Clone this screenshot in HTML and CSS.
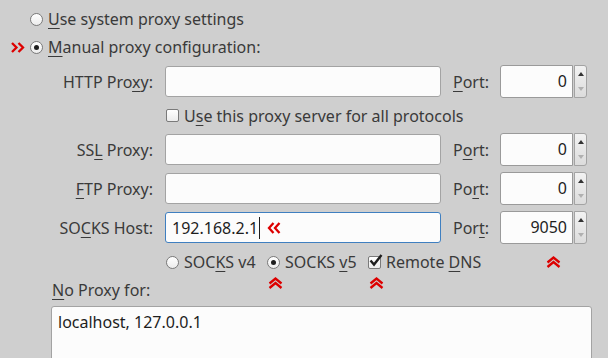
FILE: index.html
```html
<!DOCTYPE html>
<html lang="en">
<head>
    <meta charset="UTF-8">
    <title>Proxy settings</title>
    <link rel="stylesheet" href="styles.css">
</head>
<body>
    <div class="panel">
        <div class="choice">
            <span class="marker"></span>
            <span class="radio"></span>
            <span><u>U</u>se system proxy settings</span>
        </div>
        <div class="choice">
            <span class="marker">
                <svg width="14" height="11" viewBox="0 0 14 11"><polyline points="1,1 5.5,5.5 1,10" /><polyline points="7.5,1 12,5.5 7.5,10" /></svg>
            </span>
            <span class="radio on"></span>
            <span><u>M</u>anual proxy configuration:</span>
        </div>

        <div class="proxy-grid">
            <div class="label">HTTP Pro<u>x</u>y:</div>
            <div class="field"></div>
            <div class="port-label"><u>P</u>ort:</div>
            <div class="spin"><div class="spin-value">0</div><div class="spin-buttons"><span class="up"></span><span class="down"></span></div></div>

            <div class="check-row">
                <span class="check"></span>
                <span>U<u>s</u>e this proxy server for all protocols</span>
            </div>

            <div class="label">SS<u>L</u> Proxy:</div>
            <div class="field"></div>
            <div class="port-label">P<u>o</u>rt:</div>
            <div class="spin"><div class="spin-value">0</div><div class="spin-buttons"><span class="up"></span><span class="down"></span></div></div>

            <div class="label"><u>F</u>TP Proxy:</div>
            <div class="field"></div>
            <div class="port-label">Po<u>r</u>t:</div>
            <div class="spin"><div class="spin-value">0</div><div class="spin-buttons"><span class="up"></span><span class="down"></span></div></div>

            <div class="label">SO<u>C</u>KS Host:</div>
            <div class="field focus">
                <span>192.168.2.1</span><span class="caret"></span>
                <svg class="back-mark" width="14" height="12" viewBox="0 0 14 12"><polyline points="6.5,1 2,6 6.5,11" /><polyline points="12.5,1 8,6 12.5,11" /></svg>
            </div>
            <div class="port-label">Por<u>t</u>:</div>
            <div class="spin"><div class="spin-value">9050</div><div class="spin-buttons"><span class="up"></span><span class="down"></span></div></div>

            <div class="options">
                <div class="option">
                    <span class="radio"></span>
                    <span>SOC<u>K</u>S v4</span>
                </div>
                <div class="option">
                    <span class="radio on"></span>
                    <span>SOCKS <u>v</u>5</span>
                    <svg class="up-mark" width="15" height="12" viewBox="0 0 15 12"><polyline points="1.5,6.5 7.5,1.5 13.5,6.5" /><polyline points="1.5,11 7.5,6 13.5,11" /></svg>
                </div>
                <div class="option">
                    <span class="check">
                        <svg width="15" height="13" viewBox="0 0 15 13"><path class="tick" d="M2.5 6.5 L6 10.5 L13.5 1" /></svg>
                    </span>
                    <span>Remote <u>D</u>NS</span>
                    <svg class="up-mark" width="15" height="12" viewBox="0 0 15 12"><polyline points="1.5,6.5 7.5,1.5 13.5,6.5" /><polyline points="1.5,11 7.5,6 13.5,11" /></svg>
                </div>
            </div>
            <div class="port-mark">
                <svg width="15" height="12" viewBox="0 0 15 12"><polyline points="1.5,6.5 7.5,1.5 13.5,6.5" /><polyline points="1.5,11 7.5,6 13.5,11" /></svg>
            </div>
        </div>

        <div class="no-proxy-label"><u>N</u>o Proxy for:</div>
        <div class="no-proxy">localhost, 127.0.0.1</div>
    </div>
</body>
</html>
```

FILE: styles.css
```css
/* Page */
body {
    margin: 0;
    background: #cfcfcf;
    font-family: 'Noto Sans', sans-serif;
    font-size: 16px;
    color: #3a3a3a;
    overflow: hidden;
}

.panel {
    padding-top: 5px;
    height: 358px;
    box-sizing: border-box;
    overflow: hidden;
}

u {
    text-decoration-thickness: 1px;
    text-underline-offset: 3px;
}

svg polyline {
    fill: none;
    stroke: #dd0000;
    stroke-width: 2.3;
}

/* Radio choices */
.choice {
    display: flex;
    align-items: center;
    height: 28px;
}

.marker {
    width: 30px;
    display: flex;
    align-items: center;
    padding-left: 11px;
    box-sizing: border-box;
}

.radio {
    width: 13px;
    height: 13px;
    box-sizing: border-box;
    border: 1px solid #7a7a7a;
    border-radius: 50%;
    background: linear-gradient(#ffffff, #ececec);
    margin-right: 5px;
    flex: none;
    position: relative;
}

.radio.on::after {
    content: '';
    position: absolute;
    width: 5px;
    height: 5px;
    border-radius: 50%;
    background: #1e1e1e;
    top: 3px;
    left: 3px;
}

.check {
    width: 13px;
    height: 13px;
    box-sizing: border-box;
    border: 1px solid #7a7a7a;
    border-radius: 2px;
    background: linear-gradient(#ffffff, #ececec);
    margin-right: 5px;
    flex: none;
    position: relative;
}

.check svg {
    position: absolute;
    left: -1px;
    top: -3px;
}

.tick {
    fill: none;
    stroke: #1e1e1e;
    stroke-width: 2.4;
}

/* Proxy rows */
.proxy-grid {
    margin-top: 5px;
    display: grid;
    grid-template-columns: 153px 276px 35px 87px;
    grid-template-rows: 31px 21px 31px 31px 31px 22px;
    column-gap: 12px;
    row-gap: 8px;
    align-items: center;
}

.label {
    text-align: right;
    white-space: nowrap;
}

.port-label {
    white-space: nowrap;
}

.field {
    height: 31px;
    box-sizing: border-box;
    border: 1px solid #a3a3a3;
    border-radius: 3px;
    background: #fcfcfc;
    display: flex;
    align-items: center;
    padding-left: 6px;
    color: #1e1e1e;
}

.field.focus {
    border-color: #3f7fc0;
}

.caret {
    width: 1px;
    height: 22px;
    background: #1e1e1e;
    margin-left: 1px;
}

.back-mark {
    margin-left: 7px;
}

.spin {
    height: 33px;
    display: flex;
    gap: 1px;
}

.spin-value {
    flex: 1;
    box-sizing: border-box;
    border: 1px solid #9a9a9a;
    border-radius: 3px 0 0 3px;
    background: #fcfcfc;
    color: #1e1e1e;
    text-align: right;
    padding-right: 5px;
    line-height: 30px;
}

.spin-buttons {
    width: 13px;
    box-sizing: border-box;
    border: 1px solid #a3a3a3;
    border-radius: 0 3px 3px 0;
    background: linear-gradient(#f2f2f2, #dcdcdc);
    display: flex;
    flex-direction: column;
    justify-content: space-between;
    align-items: center;
    padding: 6px 0 6px;
}

.spin-buttons .up {
    border-left: 3px solid transparent;
    border-right: 3px solid transparent;
    border-bottom: 4px solid #333;
}

.spin-buttons .down {
    border-left: 3px solid transparent;
    border-right: 3px solid transparent;
    border-top: 4px solid #b0b0b0;
}

.check-row {
    grid-column: 2 / 5;
    display: flex;
    align-items: center;
    padding-left: 1px;
}

/* SOCKS options */
.options {
    grid-column: 2 / 4;
    display: flex;
    align-items: center;
}

.option {
    flex: 0 0 101px;
    display: flex;
    align-items: center;
    position: relative;
    height: 22px;
    white-space: nowrap;
}

.option .radio,
.option .check {
    margin-left: 1px;
}

.up-mark {
    position: absolute;
    left: 2px;
    top: 26px;
}

.port-mark {
    display: flex;
    padding-left: 46px;
}

/* No proxy */
.no-proxy-label {
    margin: 6px 0 0 52px;
    height: 20px;
}

.no-proxy {
    margin: 7px 0 0 51px;
    width: 541px;
    height: 80px;
    box-sizing: border-box;
    border: 1px solid #a3a3a3;
    border-radius: 3px;
    background: #fcfcfc;
    color: #1e1e1e;
    padding: 4px 6px;
}
```
